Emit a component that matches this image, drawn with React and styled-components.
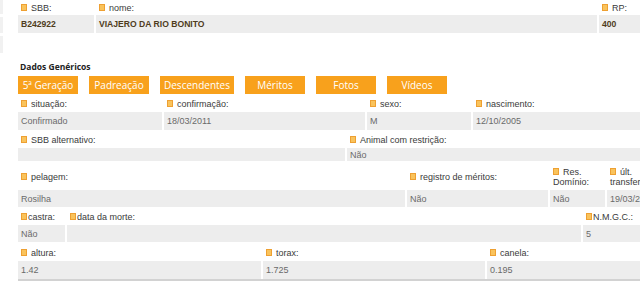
import React from 'react';
import styled, { createGlobalStyle } from 'styled-components';

const GlobalStyle = createGlobalStyle`
  html, body {
    margin: 0;
    padding: 0;
    background: #fff;
    overflow: hidden;
  }
  body {
    font-family: "Liberation Sans", Arial, sans-serif;
  }
`;

const Page = styled.div`
  display: flex;
  align-items: flex-start;
  width: 700px;
`;

const Rail = styled.div`
  width: 3px;
  margin-right: 15px;
  display: flex;
  flex-direction: column;
  gap: 3px;
`;

const RailBlock = styled.div`
  height: ${(props) => props.h}px;
  background: #f1f1f1;
`;

const Content = styled.div`
  width: 660px;
`;

const Grid = styled.div`
  display: grid;
  grid-template-columns: ${(props) => props.cols};
  column-gap: 2px;
  margin-bottom: 2px;
  border-bottom: ${(props) => (props.last ? '2px solid #d2d2d2' : 'none')};
`;

const LabelCell = styled.div`
  min-height: ${(props) => props.h || 16}px;
  display: flex;
  align-items: center;
  padding: 0 3px;
  font-size: 9px;
  line-height: 10px;
  color: #3a3a3a;
  overflow: hidden;
  white-space: ${(props) => (props.wrap ? 'normal' : 'nowrap')};
`;

const Icon = styled.span`
  display: inline-block;
  vertical-align: 0;
  width: 4px;
  height: 5px;
  margin-right: ${(props) => (props.tight ? '1px' : '4px')};
  background: #f9c35c;
  border: 1px solid #eea032;
`;

const ValueCell = styled.div`
  height: ${(props) => props.h || 18}px;
  display: flex;
  align-items: center;
  padding: 0 3px;
  background: #ededed;
  font-size: ${(props) => (props.bold ? '8.6px' : '9px')};
  font-weight: ${(props) => (props.bold ? 700 : 400)};
  color: ${(props) => (props.bold ? '#4f3c1c' : '#6a6a6a')};
  white-space: nowrap;
  overflow: hidden;
`;

const Title = styled.div`
  margin: 27px 0 2px 2px;
  font-family: "Open Sans", sans-serif;
  font-weight: 700;
  font-size: 8.5px;
  line-height: 14px;
  color: #222;
`;

const Tabs = styled.div`
  display: flex;
  gap: 11px;
  margin-bottom: 2px;
`;

const Tab = styled.button`
  min-width: 60px;
  height: 18px;
  padding: 0 4px;
  border: none;
  border-radius: 0;
  background: #f8a11c;
  color: #fff;
  font-family: "Open Sans", sans-serif;
  font-size: 10px;
  letter-spacing: 0;
  cursor: pointer;
`;

const Section = ({ cols, fields, labelH, valueH, last }) => (
  <Grid cols={cols} last={last}>
    {fields.map((f) => (
      <LabelCell key={`l-${f.label}`} h={labelH} wrap={f.wrap}>
        <span>
          <Icon tight={f.tight} />
          {f.label}
        </span>
      </LabelCell>
    ))}
    {fields.map((f) => (
      <ValueCell key={`v-${f.label}`} h={valueH} bold={f.bold}>
        {f.value}
      </ValueCell>
    ))}
  </Grid>
);

const tabs = ['5ª Geração', 'Padreação', 'Descendentes', 'Méritos', 'Fotos', 'Vídeos'];

export default function App() {
  return (
    <>
      <GlobalStyle />
      <Page>
        <Rail>
          <RailBlock h={14} />
          <RailBlock h={16} />
          <RailBlock h={17} />
        </Rail>
        <Content>
          <Section
            cols="76px 501px 1fr"
            labelH={15}
            fields={[
              { label: 'SBB:', value: 'B242922', bold: true },
              { label: 'nome:', value: 'VIAJERO DA RIO BONITO', bold: true },
              { label: 'RP:', value: '400', bold: true },
            ]}
          />
          <Title>Dados Genéricos</Title>
          <Tabs>
            {tabs.map((t) => (
              <Tab key={t}>{t}</Tab>
            ))}
          </Tabs>
          <Section
            cols="144px 201px 104px 1fr"
            fields={[
              { label: 'situação:', value: 'Confirmado' },
              { label: 'confirmação:', value: '18/03/2011' },
              { label: 'sexo:', value: 'M' },
              { label: 'nascimento:', value: '12/10/2005' },
            ]}
          />
          <Section
            cols="327px 1fr"
            valueH={13}
            fields={[
              { label: 'SBB alternativo:', value: '' },
              { label: 'Animal com restrição:', value: 'Não' },
            ]}
          />
          <Section
            cols="387px 141px 55px 1fr"
            labelH={27}
            valueH={17}
            fields={[
              { label: 'pelagem:', value: 'Rosilha' },
              { label: 'registro de méritos:', value: 'Não' },
              { label: 'Res. Domínio:', value: 'Não', wrap: true },
              { label: 'últ. transferencia:', value: '19/03/2011', wrap: true },
            ]}
          />
          <Section
            cols="47px 514px 1fr"
            valueH={17}
            fields={[
              { label: 'castra:', value: 'Não', tight: true },
              { label: 'data da morte:', value: '', tight: true },
              { label: 'N.M.G.C.:', value: '5', tight: true },
            ]}
          />
          <Section
            cols="243px 222px 1fr"
            labelH={17}
            last
            fields={[
              { label: 'altura:', value: '1.42' },
              { label: 'torax:', value: '1.725' },
              { label: 'canela:', value: '0.195' },
            ]}
          />
        </Content>
      </Page>
    </>
  );
}
